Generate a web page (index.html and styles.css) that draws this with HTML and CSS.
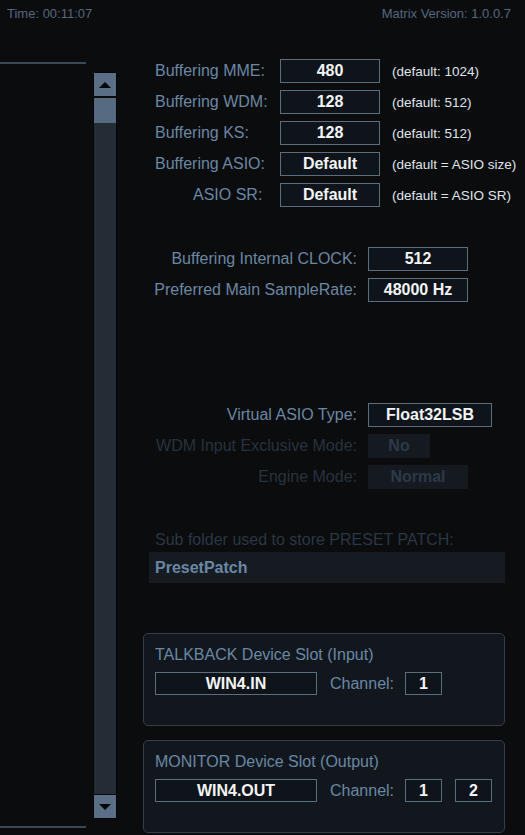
FILE: index.html
```html
<!DOCTYPE html>
<html>
<head>
<meta charset="utf-8">
<link rel="stylesheet" href="styles.css">
</head>
<body>
<div class="app">
  <header class="header">
    <span>Time: 00:11:07</span>
    <span>Matrix Version: 1.0.0.7</span>
  </header>
  <div class="main">
    <div class="left">
      <div class="list"></div>
      <div class="scrollbar">
        <div class="sb-btn"><span class="arrow up"></span></div>
        <div class="sb-thumb"></div>
        <div class="sb-track"></div>
        <div class="sb-btn"><span class="arrow down"></span></div>
      </div>
    </div>
    <div class="right">
      <div class="buffers">
        <span class="lbl">Buffering MME:</span><span class="box">480</span><span class="def">(default: 1024)</span>
        <span class="lbl">Buffering WDM:</span><span class="box">128</span><span class="def">(default: 512)</span>
        <span class="lbl">Buffering KS:</span><span class="box">128</span><span class="def">(default: 512)</span>
        <span class="lbl">Buffering ASIO:</span><span class="box">Default</span><span class="def">(default = ASIO size)</span>
        <span class="lbl indent">ASIO SR:</span><span class="box">Default</span><span class="def">(default = ASIO SR)</span>
      </div>
      <div class="group clock">
        <span class="lbl r">Buffering Internal CLOCK:</span><span class="box w100">512</span>
        <span class="lbl r">Preferred Main SampleRate:</span><span class="box w100">48000 Hz</span>
      </div>
      <div class="group engine">
        <span class="lbl r">Virtual ASIO Type:</span><span class="box w124">Float32LSB</span>
        <span class="lbl r dis">WDM Input Exclusive Mode:</span><span class="box dbox w62">No</span>
        <span class="lbl r dis">Engine Mode:</span><span class="box dbox w100">Normal</span>
      </div>
      <div class="folder">
        <div class="folder-lbl">Sub folder used to store PRESET PATCH:</div>
        <div class="folder-box">PresetPatch</div>
      </div>
      <div class="panel first">
        <div class="panel-title">TALKBACK Device Slot (Input)</div>
        <div class="slot-row">
          <span class="box dev">WIN4.IN</span>
          <span class="ch-lbl">Channel:</span>
          <span class="box ch">1</span>
        </div>
      </div>
      <div class="panel second">
        <div class="panel-title">MONITOR Device Slot (Output)</div>
        <div class="slot-row">
          <span class="box dev">WIN4.OUT</span>
          <span class="ch-lbl">Channel:</span>
          <span class="box ch">1</span>
          <span class="box ch">2</span>
        </div>
      </div>
    </div>
  </div>
</div>
</body>
</html>
```
FILE: styles.css
```css
* { box-sizing: border-box; }
html, body { margin: 0; padding: 0; background: #0b0c0d; }
body {
  width: 525px;
  height: 835px;
  overflow: hidden;
  font-family: "Liberation Sans", Arial, sans-serif;
}
.app { width: 525px; height: 835px; }

.header {
  height: 56px;
  display: flex;
  justify-content: space-between;
  padding: 7px 14px 0 7px;
  font-size: 13px;
  color: #54687e;
  line-height: 14px;
}

.main { display: flex; }

.left { display: flex; width: 143px; flex: none; }
.list {
  width: 86px;
  height: 766px;
  margin-top: 6px;
  border-top: 2px solid #3b4855;
  border-bottom: 2px solid #3b4855;
}
.scrollbar {
  margin-left: 7px;
  margin-top: 16px;
  width: 24px;
  height: 747px;
  background: #0a0c0e;
  border: 1px solid #050607;
  display: flex;
  flex-direction: column;
  gap: 1px;
}
.sb-btn {
  height: 23px;
  background: #5a6e86;
  display: flex;
  align-items: center;
  justify-content: center;
  flex: none;
}
.sb-thumb { height: 25px; background: #566a82; flex: none; margin-top: 1px; }
.sb-track { flex: 1; background: #242c36; margin-top: -1px; }
.arrow { width: 0; height: 0; border-left: 6px solid transparent; border-right: 6px solid transparent; }
.arrow.up { border-bottom: 6px solid #050608; }
.arrow.down { border-top: 6px solid #050608; }

.right {
  flex: 1;
  padding-top: 3px;
  padding-right: 20px;
}

.lbl {
  font-size: 16px;
  color: #6a87a4;
  white-space: nowrap;
}
.lbl.r { text-align: right; }
.lbl.dis { color: #27333f; }
.lbl.indent { padding-left: 38px; }

.box {
  height: 24px;
  background: #0f141b;
  border: 1px solid #5b6e80;
  color: #f2f4f6;
  font-weight: bold;
  font-size: 16px;
  display: flex;
  align-items: center;
  justify-content: center;
  white-space: nowrap;
  flex: none;
}
.box.dbox { background: #151a21; border-color: #151a21; color: #2d3946; }
.w62 { width: 62px; }
.w100 { width: 100px; }
.w124 { width: 124px; }

.buffers {
  display: grid;
  grid-template-columns: 125px 100px auto;
  column-gap: 0;
  row-gap: 7px;
  align-items: center;
  padding-left: 12px;
}
.def { font-size: 13.5px; color: #dfe4ea; white-space: nowrap; padding-left: 12px; }

.group {
  display: grid;
  grid-template-columns: 202px auto;
  column-gap: 11px;
  row-gap: 7px;
  align-items: center;
  justify-items: start;
  padding-left: 12px;
}
.group .lbl { justify-self: end; }
.clock { margin-top: 40px; }
.engine { margin-top: 101px; }

.folder { margin-top: 42px; }
.folder-lbl {
  font-size: 16px;
  color: #2a3745;
  padding-left: 12px;
  line-height: 18px;
}
.folder-box {
  margin-top: 3px;
  margin-left: 6px;
  width: 356px;
  height: 31px;
  background: #161b22;
  color: #6a87a4;
  font-weight: bold;
  font-size: 16px;
  display: flex;
  align-items: center;
  padding-left: 6px;
}

.panel {
  width: 362px;
  height: 93px;
  border: 1px solid #343f4b;
  border-radius: 5px;
  background: #12171e;
  padding: 11px 11px 0 11px;
}
.panel.first { margin-top: 50px; }
.panel.second { margin-top: 14px; }
.panel-title {
  font-size: 16px;
  color: #6a87a4;
  line-height: 20px;
}
.slot-row {
  margin-top: 7px;
  display: flex;
  align-items: center;
}
.box.dev { width: 162px; height: 23px; }
.ch-lbl { font-size: 16px; color: #6a87a4; margin-left: 13px; width: 75px; flex: none; }
.box.ch { width: 37px; height: 23px; margin-right: 13px; }
```
